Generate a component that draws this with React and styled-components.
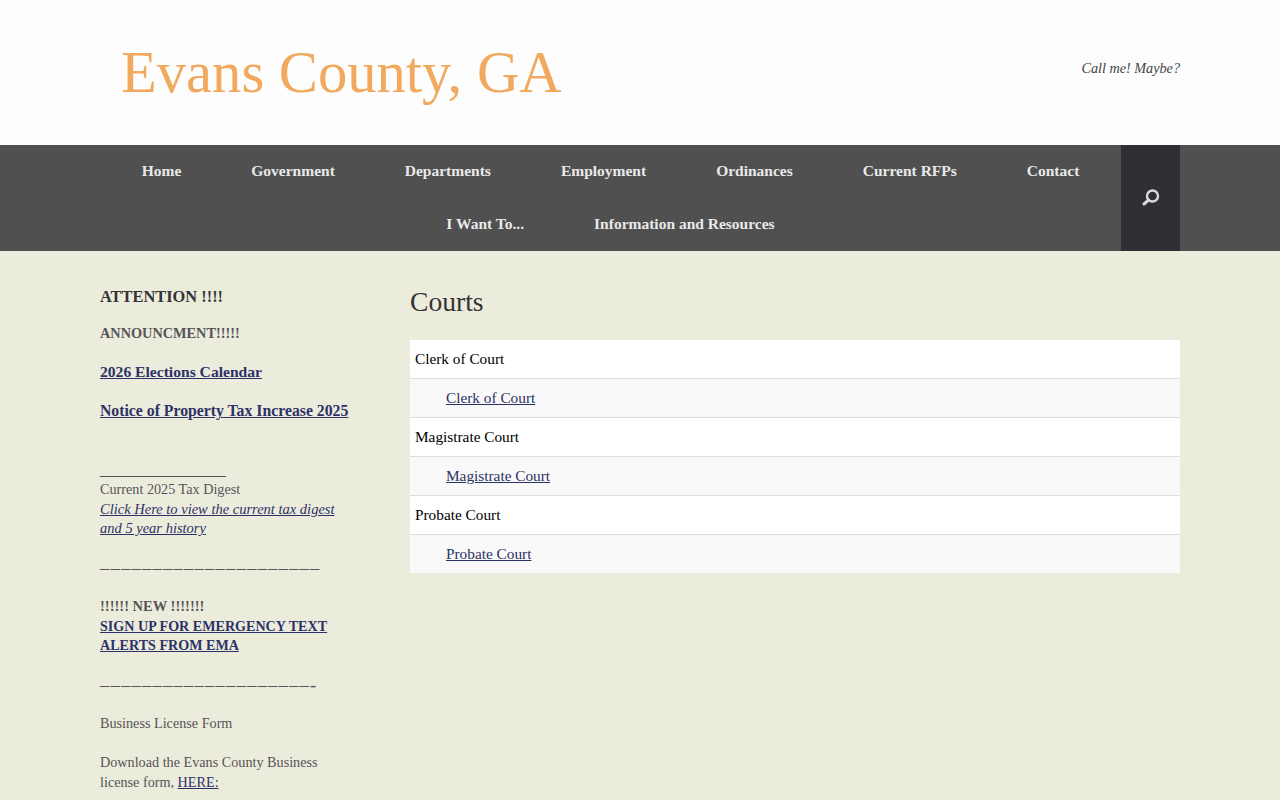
import React from "react";
import styled, { createGlobalStyle } from "styled-components";

const GlobalStyle = createGlobalStyle`
  html, body {
    margin: 0;
    height: 800px;
    overflow: hidden;
    background: #ececdd;
    font-family: "Liberation Serif", "Times New Roman", serif;
  }
  a {
    color: #2c3266;
  }
`;

const Masthead = styled.header`
  height: 145px;
  background: #fdfdfd;
`;

const MastheadInner = styled.div`
  width: 1080px;
  height: 100%;
  margin: 0 auto;
  display: flex;
  align-items: center;
  justify-content: space-between;
`;

const SiteTitle = styled.h1`
  margin: 2px 0 0 21px;
  font-size: 58.6px;
  font-weight: 400;
  line-height: 1;
  color: #f0a95e;
`;

const Tagline = styled.div`
  margin-bottom: 9px;
  font-size: 14.2px;
  font-style: italic;
  color: #444;
`;

const NavBar = styled.nav`
  background: #505050;
`;

const NavInner = styled.div`
  width: 1080px;
  margin: 0 auto;
  display: flex;
`;

const NavList = styled.ul`
  flex: 1;
  margin: 0;
  padding: 0;
  list-style: none;
  display: flex;
  flex-wrap: wrap;
  justify-content: center;
`;

const NavItem = styled.li`
  padding: 0 35px;
  height: 53px;
  line-height: 52px;
  font-size: 15.5px;
  font-weight: 700;
  color: #e9e9e9;
`;

const SearchButton = styled.div`
  width: 59px;
  background: #2e2f34;
  display: flex;
  align-items: center;
  justify-content: center;
`;

const Main = styled.main`
  width: 1080px;
  margin: 0 auto;
  padding-top: 35px;
  display: flex;
`;

const Sidebar = styled.aside`
  width: 250px;
  margin-right: 60px;
  padding-top: 1px;
  flex-shrink: 0;
`;

const WidgetTitle = styled.h3`
  margin: 0 0 17px;
  font-size: 16.4px;
  line-height: 20px;
  font-weight: 700;
  color: #333;
`;

const WidgetText = styled.div`
  font-size: 14.2px;
  line-height: 19.5px;
  color: #555;
`;

const Bold = styled.strong`
  font-size: ${(p) => p.$size || "14.3px"};
  line-height: 0;
`;

const DigestLink = styled.a`
  font-size: 14.5px;
  font-style: italic;
  line-height: 0;
`;

const Rule = styled.span`
  font-size: 16.8px;
  line-height: 0;
  white-space: nowrap;
`;

const DashRule = styled.span`
  font-size: 18.6px;
  letter-spacing: 1.2px;
  line-height: 0;
  vertical-align: -2px;
  white-space: nowrap;
`;

const Content = styled.section`
  flex: 1;
`;

const PageTitle = styled.h2`
  margin: 0 0 22px;
  font-size: 27.6px;
  line-height: 32px;
  font-weight: 400;
  color: #333;
`;

const CourtList = styled.div`
  display: flex;
  flex-direction: column;
`;

const CourtRow = styled.div`
  height: 38px;
  line-height: 37px;
  padding-left: ${(p) => (p.$sub ? "36px" : "5px")};
  font-size: 15.3px;
  color: #000;
  background: ${(p) => (p.$sub ? "#f9f9f9" : "#fff")};
  border-bottom: 1px solid #ddd;

  &:last-child {
    border-bottom: 0;
  }
`;

const navItems = [
  "Home",
  "Government",
  "Departments",
  "Employment",
  "Ordinances",
  "Current RFPs",
  "Contact",
  "I Want To...",
  "Information and Resources",
];

const courts = ["Clerk of Court", "Magistrate Court", "Probate Court"];

const SearchIcon = () => (
  <svg width="20" height="20" viewBox="0 0 20 20" fill="none" stroke="#d9dbe0">
    <circle cx="11.5" cy="8" r="5.5" strokeWidth="2.4" />
    <line x1="7.5" y1="12.2" x2="3" y2="16" strokeWidth="3" strokeLinecap="round" />
  </svg>
);

function App() {
  return (
    <>
      <GlobalStyle />
      <Masthead>
        <MastheadInner>
          <SiteTitle>Evans County, GA</SiteTitle>
          <Tagline>Call me! Maybe?</Tagline>
        </MastheadInner>
      </Masthead>
      <NavBar>
        <NavInner>
          <NavList>
            {navItems.map((item) => (
              <NavItem key={item}>{item}</NavItem>
            ))}
          </NavList>
          <SearchButton>
            <SearchIcon />
          </SearchButton>
        </NavInner>
      </NavBar>
      <Main>
        <Sidebar>
          <WidgetTitle>ATTENTION !!!!</WidgetTitle>
          <WidgetText>
            <Bold>ANNOUNCMENT!!!!!</Bold>
            <br />
            <br />
            <a href="#"><Bold $size="15.6px">2026 Elections Calendar</Bold></a>
            <br />
            <br />
            <a href="#"><Bold $size="15.75px">Notice of Property Tax Increase 2025</Bold></a>
            <br />
            <br />
            <br />
            <Rule>_______________</Rule>
            <br />
            Current 2025 Tax Digest
            <br />
            <DigestLink href="#">Click Here to view the current tax digest and 5 year history</DigestLink>
            <br />
            <br />
            <DashRule>–––––––––––––––––––––</DashRule>
            <br />
            <br />
            <Bold $size="14.5px">!!!!!! NEW !!!!!!!</Bold>
            <br />
            <a href="#"><Bold $size="14.1px">SIGN UP FOR EMERGENCY TEXT ALERTS FROM EMA</Bold></a>
            <br />
            <br />
            <DashRule>––––––––––––––––––––-</DashRule>
            <br />
            <br />
            Business License Form
            <br />
            <br />
            Download the Evans County Business license form, <a href="#">HERE:</a>
          </WidgetText>
        </Sidebar>
        <Content>
          <PageTitle>Courts</PageTitle>
          <CourtList>
            {courts.map((court) => (
              <React.Fragment key={court}>
                <CourtRow>{court}</CourtRow>
                <CourtRow $sub>
                  <a href="#">{court}</a>
                </CourtRow>
              </React.Fragment>
            ))}
          </CourtList>
        </Content>
      </Main>
    </>
  );
}

export default App;
